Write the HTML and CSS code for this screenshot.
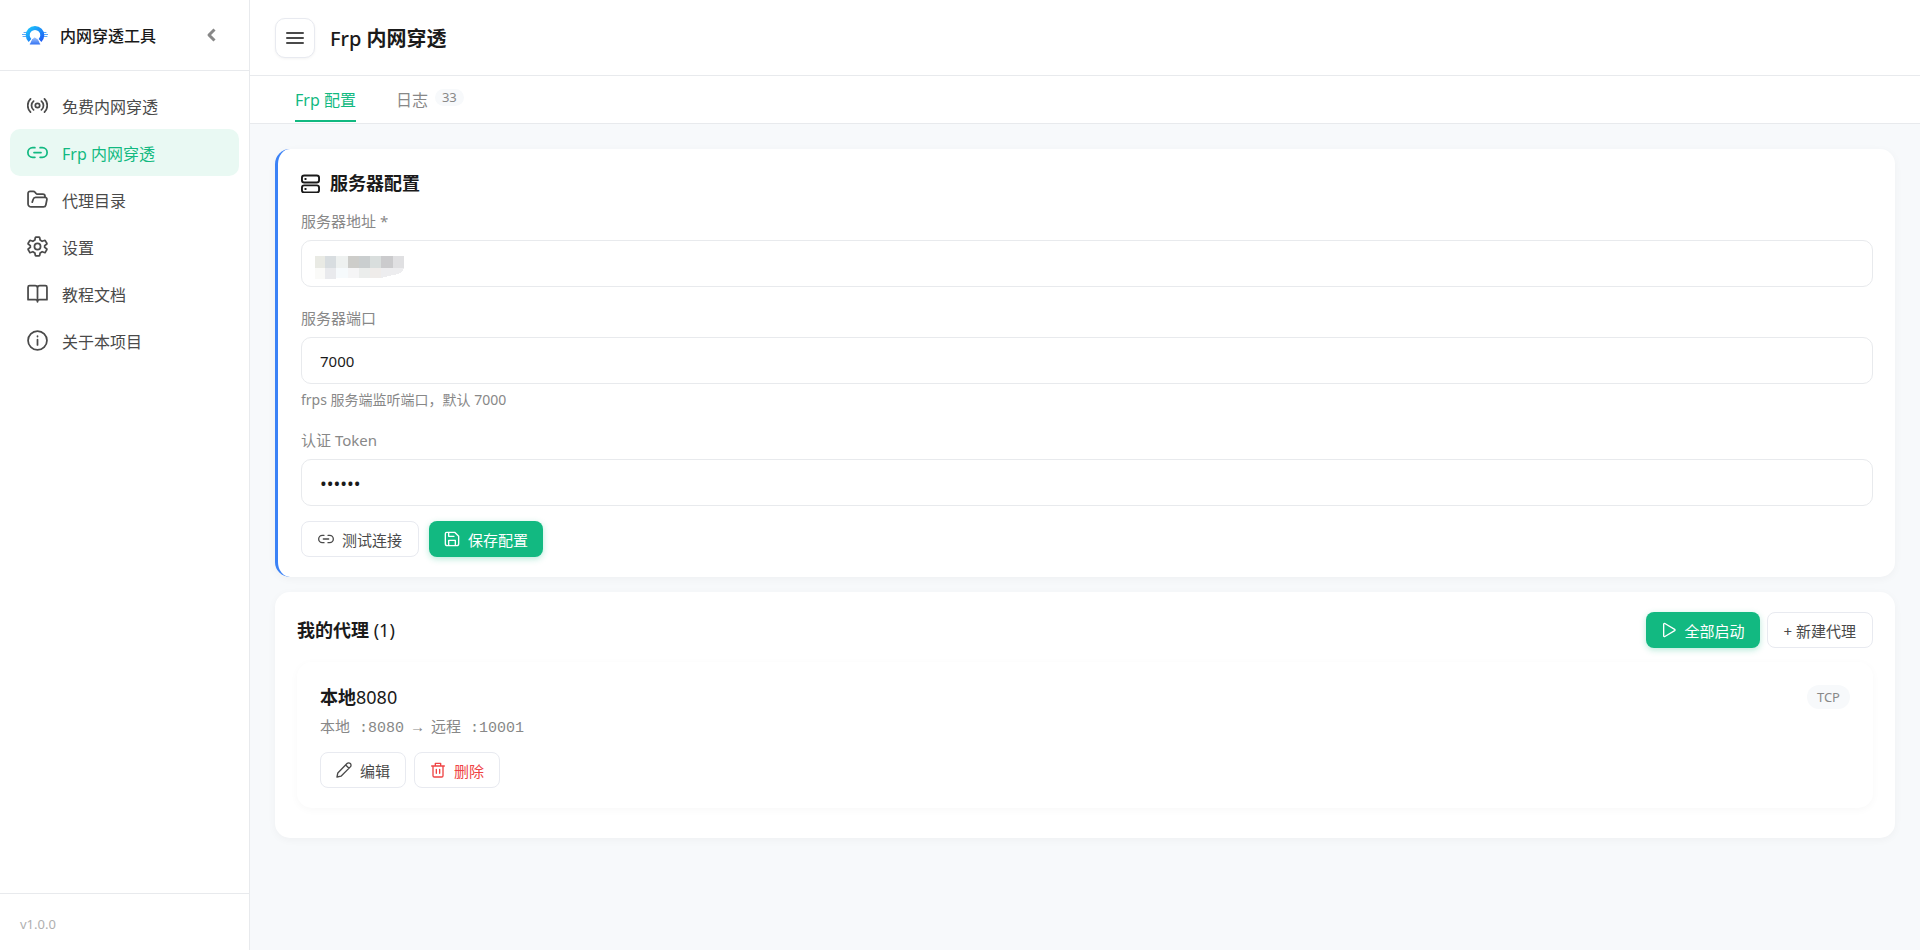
FILE: index.html
```html
<!DOCTYPE html>
<html lang="zh-CN">
<head>
  <meta charset="UTF-8">
  <meta name="viewport" content="width=device-width, initial-scale=1.0">
  <title>内网穿透工具</title>
  <link rel="stylesheet" href="styles.css">
</head>
<body>
  <div class="app">
    <aside class="sidebar">
      <div class="sidebar-header">
        <svg class="logo" viewBox="0 0 26 20" aria-hidden="true">
          <defs>
            <linearGradient id="logo-ring" x1="0" y1="0" x2="1" y2="1">
              <stop offset="0" stop-color="#1cc4fb"/>
              <stop offset="1" stop-color="#1d5cf5"/>
            </linearGradient>
            <linearGradient id="logo-base" x1="0" y1="0" x2="0" y2="1">
              <stop offset="0" stop-color="#a9c8fb"/>
              <stop offset="1" stop-color="#2b6df3"/>
            </linearGradient>
          </defs>
          <path d="M0 9.500h5M1 11.500h4M2 7.500h3M21 9.500h5M21 11.500h4M21 7.500h3" stroke="#5aa9f8" stroke-width="1"/>
          <path d="M8 15.500A7.300 7.300 0 1 1 18 15.500" fill="none" stroke="url(#logo-ring)" stroke-width="4" stroke-linecap="butt"/>
          <path d="M13 12l3.500 2.500L19 20H7l2.500-5.500z" fill="url(#logo-base)" stroke="#fff" stroke-width="1"/>
        </svg>
        <span class="brand">内网穿透工具</span>
        <button class="collapse-btn" type="button" aria-label="收起菜单">
          <svg viewBox="0 0 12 16"><path d="M9.500 2.500L4 8l5.500 5.500"/></svg>
        </button>
      </div>
      <nav class="nav">
        <a class="nav-item" href="#free">
          <svg class="icon" viewBox="0 0 24 24"><circle cx="12" cy="12" r="2.500"/><path d="M7.500 17a6.500 6.500 0 0 1 0-10M16.500 7a6.500 6.500 0 0 1 0 10M4 19.500a10.500 10.500 0 0 1 0-15M20 4.500a10.500 10.500 0 0 1 0 15"/></svg>
          <span>免费内网穿透</span>
        </a>
        <a class="nav-item active" href="#frp" aria-current="page">
          <svg class="icon" viewBox="0 0 24 24"><path d="M9 17.500H6.500a5.500 5.500 0 0 1 0-11H9M15 6.500h2.500a5.500 5.500 0 0 1 0 11H15M8 12h8"/></svg>
          <span>Frp 内网穿透</span>
        </a>
        <a class="nav-item" href="#dir">
          <svg class="icon" viewBox="0 0 24 24"><path d="M5 20.500a3.500 3.500 0 0 1-3.800-3.500V5a2.300 2.300 0 0 1 2.300-2.300h3.700c.8 0 1.500.4 2 1l1 1.300c.4.600 1 .9 1.700.9H18a2.600 2.600 0 0 1 2.600 2.600v1M6 15l1.200-3.500A2.800 2.800 0 0 1 9.800 9.500h10.700a2.300 2.300 0 0 1 2.200 2.800l-1.200 6a2.800 2.800 0 0 1-2.700 2.200H4.500"/></svg>
          <span>代理目录</span>
        </a>
        <a class="nav-item" href="#settings">
          <svg class="icon" viewBox="0 0 24 24"><circle cx="12" cy="12" r="3.500"/><path d="M10.500 1.200h3a1 1 0 0 1 1 .8l.5 2.600 2.300 1.400 2.500-.9a1 1 0 0 1 1.200.4l1.500 2.600a1 1 0 0 1-.2 1.300L20.200 11v2l2.100 1.600a1 1 0 0 1 .2 1.300L21 18.500a1 1 0 0 1-1.200.4l-2.500-.9-2.300 1.400-.5 2.600a1 1 0 0 1-1 .8h-3a1 1 0 0 1-1-.8L9 19.400 6.700 18l-2.500.9a1 1 0 0 1-1.200-.4l-1.500-2.600a1 1 0 0 1 .2-1.300L3.800 13v-2L1.700 9.400a1 1 0 0 1-.2-1.300L3 5.500a1 1 0 0 1 1.200-.4l2.500.9L9 4.600 9.500 2a1 1 0 0 1 1-.8z"/></svg>
          <span>设置</span>
        </a>
        <a class="nav-item" href="#docs">
          <svg class="icon" viewBox="0 0 24 24"><path d="M12 5.500A2.700 2.700 0 0 0 9.300 3H3a1.800 1.800 0 0 0-1.800 1.800V19h8.300a2.500 2.500 0 0 1 2.500 2.500 2.500 2.500 0 0 1 2.500-2.500h8.300V4.800A1.800 1.800 0 0 0 21 3h-6.300A2.700 2.700 0 0 0 12 5.500zM12 5.500v16"/></svg>
          <span>教程文档</span>
        </a>
        <a class="nav-item" href="#about">
          <svg class="icon" viewBox="0 0 24 24"><circle cx="12" cy="12" r="10.800"/><path d="M12 11v6M12 7v.5"/></svg>
          <span>关于本项目</span>
        </a>
      </nav>
      <div class="sidebar-footer">v1.0.0</div>
    </aside>

    <main class="main">
      <header class="topbar">
        <button class="menu-btn" type="button" aria-label="菜单">
          <svg viewBox="0 0 18 14"><path d="M1 2h16M1 7h16M1 12h16"/></svg>
        </button>
        <h1><span class="latin">Frp</span> 内网穿透</h1>
      </header>
      <div class="tabs" role="tablist">
        <button class="tab active" type="button" role="tab" aria-selected="true">Frp 配置</button>
        <button class="tab" type="button" role="tab" aria-selected="false">日志<span class="count">33</span></button>
      </div>

      <div class="content">
        <form class="card server-card">
          <h2 class="card-title">
            <svg class="icon" viewBox="0 0 20 20"><rect x="1" y="1.500" width="18" height="7.500" rx="2.500"/><rect x="1" y="12" width="18" height="7.500" rx="2.500"/><path d="M4.500 5.200h.5M4.500 15.800h.5"/></svg>
            服务器配置
          </h2>
          <div class="field">
            <label for="server-addr">服务器地址 *</label>
            <div class="masked">
              <input type="text" id="server-addr">
              <!-- address is hidden behind mosaic blocks -->
              <svg class="mosaic" viewBox="0 0 90 23" shape-rendering="crispEdges" aria-hidden="true">
                <path fill="#e9eae4" d="M0 0h10v12H0z"/>
                <path fill="#d8dde0" d="M10 0h11v12H10z"/>
                <path fill="#eef1f0" d="M21 0h12v12H21z"/>
                <path fill="#cdcdca" d="M33 0h11v12H33z"/>
                <path fill="#cacecf" d="M44 0h11v12H44z"/>
                <path fill="#d9dedd" d="M55 0h11v12H55z"/>
                <path fill="#cbcbcd" d="M66 0h12v12H66z"/>
                <path fill="#e0e0e2" d="M78 0h11v12H78z"/>
                <path fill="#fafaf8" d="M0 12h10v11H0z"/>
                <path fill="#e9eaed" d="M10 12h11v11H10z"/>
                <path fill="#f6fafc" d="M21 12h12v10H21z"/>
                <path fill="#f5f5f6" d="M33 12h11v10H33z"/>
                <path fill="#ebedec" d="M44 12h11v10H44z"/>
                <path fill="#efecea" d="M55 12h11v10H55z"/>
                <path fill="#ededef" d="M66 12h23q-1 4-6 6l-9 2-8 2z"/>
              </svg>
            </div>
          </div>
          <div class="field">
            <label for="server-port">服务器端口</label>
            <input type="text" id="server-port" value="7000">
            <p class="hint">frps 服务端监听端口，默认 7000</p>
          </div>
          <div class="field">
            <label for="token">认证 Token</label>
            <input type="password" id="token" value="123456" autocomplete="off">
          </div>
          <div class="form-actions">
            <button class="btn" type="button">
              <svg class="icon" viewBox="0 0 24 24"><path d="M9 17.500H6.500a5.500 5.500 0 0 1 0-11H9M15 6.500h2.500a5.500 5.500 0 0 1 0 11H15M8 12h8"/></svg>
              测试连接
            </button>
            <button class="btn primary" type="button">
              <svg class="icon" viewBox="0 0 24 24"><path d="M4 2h12l6 6v11a3 3 0 0 1-3 3H5a3 3 0 0 1-3-3V4a2 2 0 0 1 2-2zM7 2v6h8M7 22v-8h10v8"/></svg>
              保存配置
            </button>
          </div>
        </form>

        <section class="card proxy-list">
          <div class="list-header">
            <h2 class="card-title"><span>我的代理 <span class="latin">(1)</span></span></h2>
            <div class="list-actions">
              <button class="btn primary" type="button">
                <svg class="icon" viewBox="0 0 24 24"><path d="M4 3.200v17.600a1.200 1.200 0 0 0 1.800 1L20.500 13a1.200 1.200 0 0 0 0-2L5.800 2.200a1.200 1.200 0 0 0-1.800 1z"/></svg>
                全部启动
              </button>
              <button class="btn" type="button">+ 新建代理</button>
            </div>
          </div>
          <article class="proxy">
            <div class="proxy-head">
              <h3>本地<span class="latin">8080</span></h3>
              <span class="type">TCP</span>
            </div>
            <p class="route">本地 :8080 → 远程 :10001</p>
            <div class="proxy-actions">
              <button class="btn" type="button">
                <svg class="icon" viewBox="0 0 24 24"><path d="M1.500 22.500l1.200-6L16.500 2.300a3.500 3.500 0 0 1 5 5L7.500 21.300zM14.500 4.500l5 5"/></svg>
                编辑
              </button>
              <button class="btn danger" type="button">
                <svg class="icon" viewBox="0 0 24 24"><path d="M2.500 6h19M4.500 6v14.500a2 2 0 0 0 2 2h11a2 2 0 0 0 2-2V6M8 6V2h8v4M9.500 11v6M14.500 11v6"/></svg>
                删除
              </button>
            </div>
          </article>
        </section>
      </div>
    </main>
  </div>
</body>
</html>
```

FILE: styles.css
```css
* {
  margin: 0;
  padding: 0;
  box-sizing: border-box;
}
body {
  font-family: 'Noto Sans', 'Noto Sans CJK SC', sans-serif;
  font-size: 16px;
  color: #1a1a1a;
  background-color: #f7f9fb;
}
button,
input {
  font-family: inherit;
}
button {
  cursor: pointer;
}
svg {
  flex-shrink: 0;
  fill: none;
  stroke: currentColor;
  stroke-linecap: round;
  stroke-linejoin: round;
}
.latin {
  font-weight: 400;
}
.app {
  display: flex;
  min-height: 100vh;
}

/* sidebar */
.sidebar {
  display: flex;
  flex-direction: column;
  flex: 0 0 250px;
  background-color: #fff;
  border-right: 1px solid #e8eaed;
}
.sidebar-header {
  display: flex;
  align-items: center;
  height: 71px;
  padding: 0 28px 0 22px;
  border-bottom: 1px solid #e8eaed;
}
.logo {
  width: 26px;
  height: 20px;
  stroke: none;
}
.brand {
  flex: 1;
  margin-left: 12px;
  font-weight: 500;
}
.collapse-btn {
  display: flex;
  padding: 2px 4px;
  border: none;
  background: none;
  color: #888;
}
.collapse-btn svg {
  width: 12px;
  height: 16px;
  stroke-width: 3;
  stroke-linecap: butt;
}
.nav {
  flex: 1;
  padding: 11px 10px;
}
.nav-item {
  display: flex;
  align-items: center;
  gap: 14px;
  height: 47px;
  padding: 0 17px;
  border-radius: 10px;
  color: #4a4a4a;
  text-decoration: none;
}
.nav-item .icon {
  width: 21px;
  height: 21px;
  stroke-width: 2;
}
.nav-item.active {
  background-color: #e9f9f3;
  color: #12b981;
}
.sidebar-footer {
  padding: 20px 20px 16px;
  border-top: 1px solid #e8eaed;
  font-size: 13px;
  line-height: 20px;
  color: #b0b0b0;
}

/* header and tabs */
.main {
  flex: 1;
  min-width: 0;
}
.topbar {
  display: flex;
  align-items: center;
  gap: 15px;
  height: 76px;
  padding: 0 25px;
  background-color: #fff;
  border-bottom: 1px solid #e8eaed;
}
.topbar h1 {
  font-size: 20px;
  font-weight: 700;
}
.menu-btn {
  display: flex;
  align-items: center;
  justify-content: center;
  width: 40px;
  height: 40px;
  border: 1px solid #e8eaf0;
  border-radius: 10px;
  background-color: #fff;
  box-shadow: 0 1px 3px rgba(0, 0, 0, 0.05);
  color: #4a4a4a;
}
.menu-btn svg {
  width: 18px;
  height: 14px;
  stroke-width: 2;
}
.topbar .latin {
  font-weight: 500;
}
.tabs {
  display: flex;
  gap: 40px;
  height: 48px;
  padding: 0 45px 1px;
  background-color: #fff;
  border-bottom: 1px solid #e8eaed;
}
.tab {
  display: flex;
  align-items: center;
  gap: 7px;
  border: none;
  border-top: 2px solid transparent;
  border-bottom: 2px solid transparent;
  background: none;
  font-size: 16px;
  color: #888;
}
.tab.active {
  border-bottom-color: #12b981;
  color: #12b981;
}
.count {
  margin-bottom: 4px;
  padding: 0 7px;
  border-radius: 10px;
  background-color: #f7f9fb;
  font-size: 13px;
  line-height: 17px;
}

/* cards */
.content {
  display: flex;
  flex-direction: column;
  gap: 15px;
  padding: 25px;
}
.card {
  padding: 20px 22px;
  border-radius: 15px;
  background-color: #fff;
  box-shadow: 0 2px 8px rgba(0, 0, 0, 0.04);
}
.card-title {
  display: flex;
  align-items: center;
  gap: 10px;
  font-size: 18px;
  font-weight: 700;
  line-height: 28px;
}
.card-title .icon {
  width: 19px;
  height: 19px;
  stroke-width: 2;
}
.server-card {
  border-left: 3px solid #3b82f6;
  padding-left: 23px;
}
.field {
  margin-top: 19px;
}
.card-title + .field {
  margin-top: 12px;
}
.field label {
  display: block;
  margin-bottom: 7px;
  font-size: 15px;
  line-height: 24px;
  color: #888;
}
.field input {
  display: block;
  width: 100%;
  height: 47px;
  padding: 0 18px;
  border: 1px solid #e8eaed;
  border-radius: 10px;
  background-color: #fff;
  font-size: 15px;
  color: #1a1a1a;
}
.field input[type="password"] {
  font-size: 18px;
}
.masked {
  position: relative;
}
.mosaic {
  position: absolute;
  top: 16px;
  left: 14px;
  width: 90px;
  height: 23px;
  stroke: none;
}
.hint {
  margin-top: 6px;
  font-size: 14px;
  line-height: 19px;
  color: #888;
}
.form-actions {
  display: flex;
  gap: 10px;
  margin-top: 15px;
}
.btn {
  display: flex;
  align-items: center;
  gap: 8px;
  height: 36px;
  padding: 0 16px;
  border: 1px solid #e8eaf0;
  border-radius: 8px;
  background-color: #fff;
  font-size: 15px;
  color: #4a4a4a;
}
.btn .icon {
  width: 16px;
  height: 16px;
  stroke-width: 2;
}
.btn.primary {
  padding: 0 15px;
  border: none;
  background-color: #12b981;
  box-shadow: 0 2px 6px rgba(18, 185, 129, 0.3);
  color: #fff;
}
.btn.danger {
  color: #ef4444;
}

/* proxies */
.proxy-list {
  padding-bottom: 30px;
}
.list-header {
  display: flex;
  align-items: center;
  justify-content: space-between;
  margin-bottom: 14px;
}
.list-actions {
  display: flex;
  gap: 7px;
}
.proxy {
  padding: 20px 23px;
  border-radius: 15px;
  box-shadow: 0 2px 8px rgba(0, 0, 0, 0.03);
}
.proxy-head {
  display: flex;
  align-items: center;
  justify-content: space-between;
}
.proxy h3 {
  font-size: 18px;
  font-weight: 700;
  line-height: 30px;
}
.type {
  padding: 0 10px;
  border-radius: 12px;
  background-color: #f7f9fb;
  font-size: 13px;
  line-height: 24px;
  color: #888;
}
.route {
  margin-top: 6px;
  font-family: 'Liberation Mono', 'Noto Sans CJK SC', monospace;
  font-size: 15px;
  line-height: 22px;
  color: #888;
}
.proxy-actions {
  display: flex;
  gap: 8px;
  margin-top: 12px;
}
.proxy-actions .btn {
  padding: 0 15px;
}
```
